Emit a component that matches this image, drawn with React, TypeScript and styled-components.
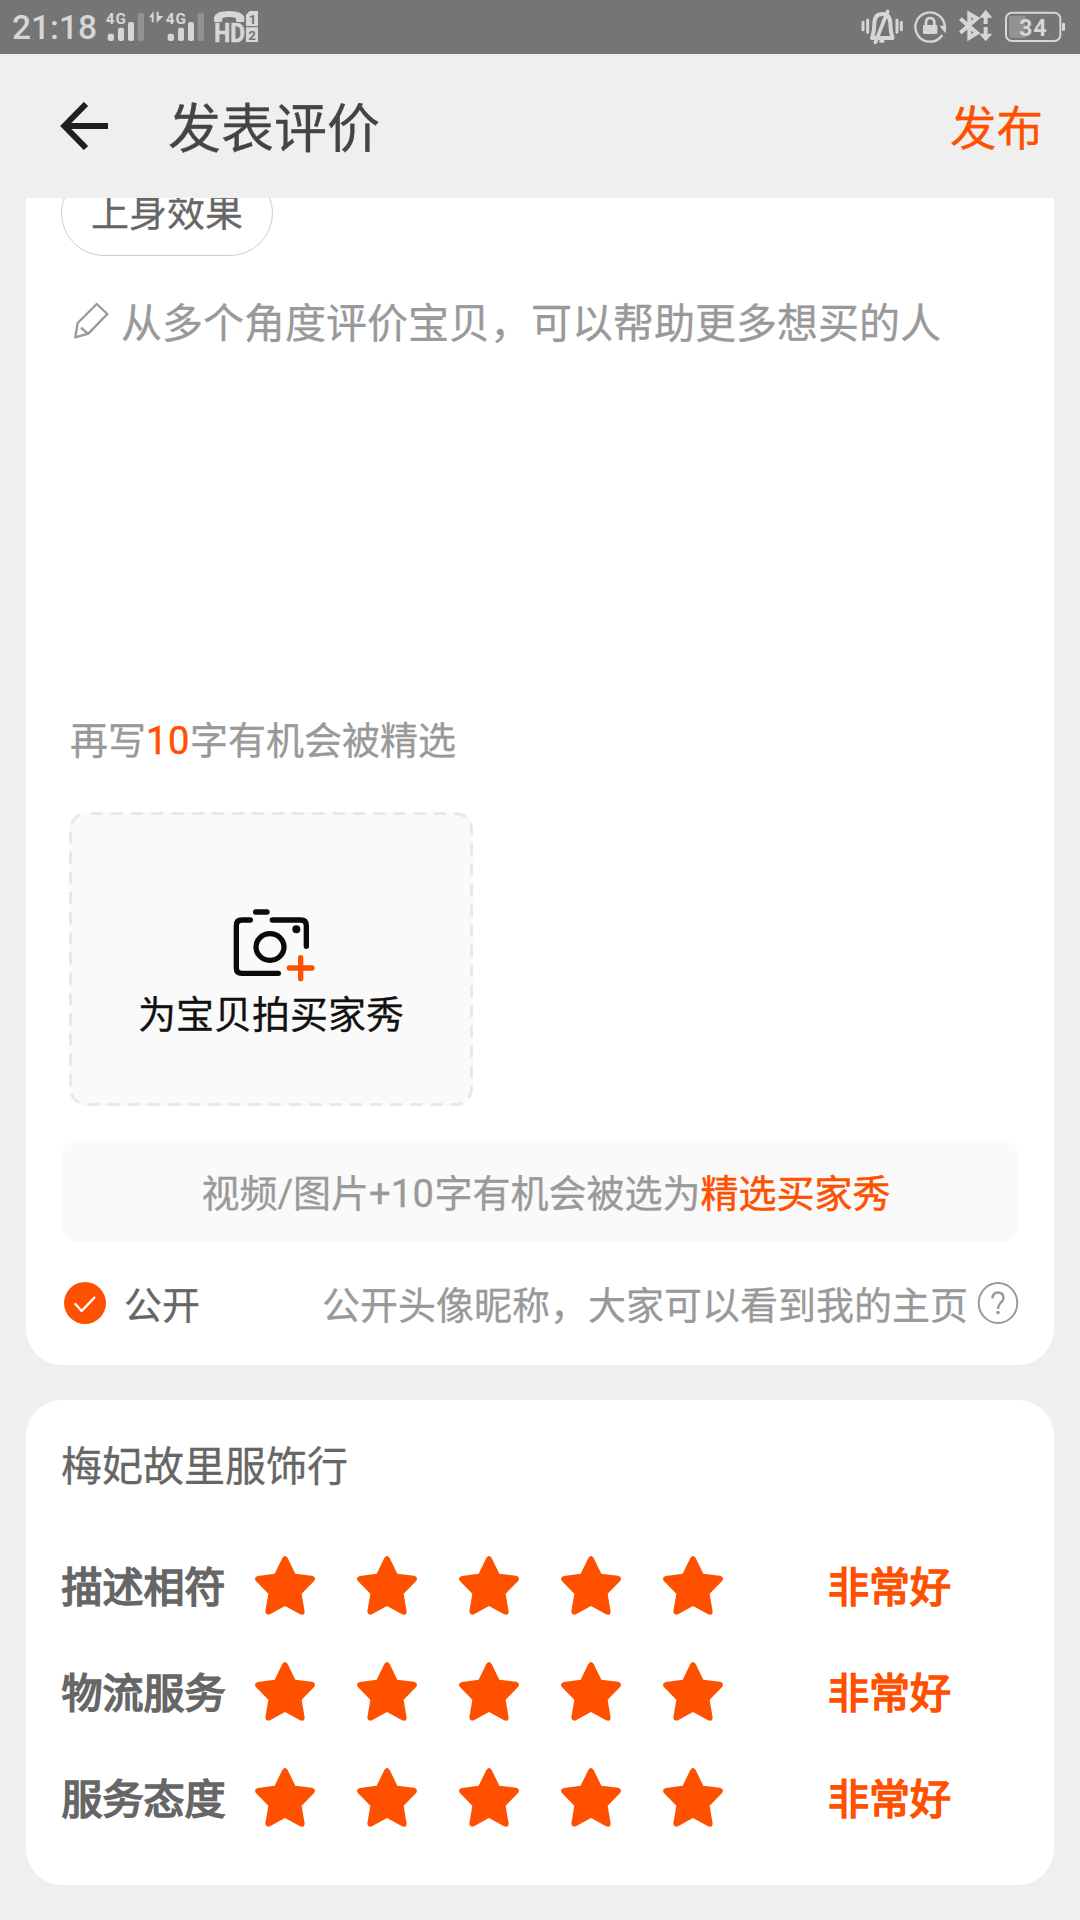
import React from "react";
import styled, { createGlobalStyle } from "styled-components";

const ORANGE = "#ff5000";
const STATUS = "#d6d6d6";
const STATUS_DIM = "#929292";

const GlobalStyle = createGlobalStyle`
  * { box-sizing: border-box; }
  body {
    margin: 0;
    background: #efefef;
    font-family: Roboto, "Noto Sans CJK SC", sans-serif;
    -webkit-text-stroke: 0.3px currentColor;
  }
  svg { -webkit-text-stroke: 0; }
`;

const Screen = styled.div`
  width: 1080px;
  height: 1920px;
  display: flex;
  flex-direction: column;
  overflow: hidden;
  background: #efefef;
`;

const StatusBar = styled.div`
  flex: none;
  height: 54px;
  padding: 0 14px 0 12px;
  display: flex;
  align-items: center;
  justify-content: space-between;
  background: #757575;
`;

const StatusGroup = styled.div`
  display: flex;
  align-items: center;
`;

const Clock = styled.span`
  width: 92px;
  font-size: 33.5px;
  font-weight: 500;
  line-height: 54px;
  padding-top: 2px;
  color: ${STATUS};
  -webkit-text-stroke: 0;
`;

const StatusIcon = styled.svg<{ $gap?: number }>`
  display: block;
  flex: none;
  height: 54px;
  margin-left: ${(p) => p.$gap ?? 0}px;
  font-family: Roboto, sans-serif;
  font-weight: 700;
`;

const Header = styled.header`
  flex: none;
  height: 144px;
  padding: 0 37px 0 60px;
  display: flex;
  align-items: center;
`;

const BackIcon = styled.svg`
  flex: none;
  width: 48px;
  height: 48px;
`;

const Title = styled.h1`
  margin: 0 0 0 60px;
  padding-top: 8px;
  flex: 1;
  font-size: 53px;
  font-weight: 400;
  line-height: 70px;
  color: #444;
`;

const Publish = styled.button`
  border: 0;
  padding: 6px 0 0;
  background: none;
  font: inherit;
  font-size: 46.5px;
  line-height: 64px;
  color: ${ORANGE};
`;

const Content = styled.main`
  flex: 1;
  min-height: 0;
  overflow: hidden;
  padding: 0 26px;
  display: flex;
  flex-direction: column;
  gap: 35px;
`;

const ReviewCard = styled.section`
  flex: none;
  height: 1167px;
  padding: 0 35px;
  overflow: hidden;
  display: flex;
  flex-direction: column;
  align-items: flex-start;
  background: #fff;
  border-radius: 0 0 36px 36px;
`;

const Tag = styled.span`
  flex: none;
  width: 212px;
  height: 86px;
  margin-top: -28px;
  display: flex;
  justify-content: center;
  border: 1px solid #ccc;
  border-radius: 43px;
  font-size: 38px;
  line-height: 84px;
  color: #666;
`;

const Editor = styled.div`
  flex: 1;
  margin-top: 36px;
  padding-left: 13px;
  display: flex;
  align-items: flex-start;
`;

const PencilIcon = styled.svg`
  flex: none;
  width: 36px;
  height: 38px;
  margin-top: 10px;
`;

const Placeholder = styled.span`
  margin-left: 11px;
  font-size: 41px;
  line-height: 64px;
  color: #999;
`;

const Counter = styled.div`
  flex: none;
  height: 50px;
  margin-left: 9px;
  font-size: 38px;
  line-height: 50px;
  color: #999;
`;

const Accent = styled.span`
  color: ${ORANGE};
  -webkit-text-stroke-width: 0.5px;
`;

const Digits = styled.span`
  letter-spacing: 0.6px;
`;

const Upload = styled.div`
  position: relative;
  flex: none;
  width: 404px;
  height: 294px;
  margin: 46px 0 0 8px;
  padding-top: 96px;
  display: flex;
  flex-direction: column;
  align-items: center;
  background: #fafafa;
  border-radius: 17px;
`;

const DashedOutline = styled.svg`
  position: absolute;
  inset: 0;
`;

const CameraIcon = styled.svg`
  flex: none;
  width: 84px;
  height: 74px;
  margin-left: 6px;
`;

const UploadLabel = styled.span`
  margin-top: 8px;
  font-size: 38px;
  line-height: 51px;
  color: #111;
`;

const Tip = styled.div`
  flex: none;
  width: 958px;
  height: 101px;
  margin-top: 35px;
  padding-left: 12px;
  display: flex;
  justify-content: center;
  background: #fafafa;
  border-radius: 17px;
  font-size: 38px;
  line-height: 107px;
  color: #999;
`;

const PublicRow = styled.div`
  flex: none;
  width: 958px;
  height: 60px;
  margin: 31px 0 32px;
  padding: 0 0 0 3px;
  display: flex;
  align-items: center;
  font-size: 38px;
  line-height: 60px;
`;

const RoundIcon = styled.svg`
  flex: none;
  width: 42px;
  height: 42px;
`;

const PublicLabel = styled.span`
  margin-left: 18px;
  padding-top: 6px;
  color: #666;
`;

const PublicHint = styled.span`
  margin: 0 9px 0 auto;
  padding-top: 6px;
  color: #999;
`;

const ShopCard = styled.section`
  flex: none;
  height: 485px;
  padding: 36px 35px 0;
  background: #fff;
  border-radius: 36px;
`;

const ShopName = styled.h2`
  margin: 0;
  height: 96px;
  font-size: 41px;
  font-weight: 400;
  line-height: 62px;
  color: #666;
`;

const RatingRow = styled.div`
  height: 106px;
  display: flex;
  align-items: center;
  font-size: 41px;
  line-height: 60px;
  -webkit-text-stroke-width: 1.7px;
`;

const RatingLabel = styled.span`
  width: 194px;
  padding: 5px 0 0 0.5px;
  color: #666;
`;

const Stars = styled.div`
  display: flex;
  gap: 42px;
`;

const StarShape = styled.svg`
  width: 60px;
  height: 59px;
`;

const Verdict = styled.span`
  margin-left: 105px;
  padding-top: 5px;
  color: ${ORANGE};
`;

function SignalBars({ x }: { x: number }) {
  return (
    <g fill={STATUS}>
      <rect x={x} y="101" width="19" height="22" rx="7" />
      <rect x={x + 31} y="83" width="18" height="40" rx="6" />
      <rect x={x + 61} y="66" width="18" height="57" rx="6" />
      <rect x={x + 90} y="38" width="19" height="85" rx="6" fill={STATUS_DIM} />
    </g>
  );
}

function Star() {
  return (
    <StarShape viewBox="705 529 180 177">
      <path
        fill={ORANGE}
        d="M787 535Q795 523 803 535L826 582L876 588Q889 591 883 603L845 642L854 696Q853 709 840 704L795 679L750 704Q737 708 736 695L745 642L707 603Q701 592 714 589L764 582Z"
      />
    </StarShape>
  );
}

const ratings = ["描述相符", "物流服务", "服务态度"];

export default function App() {
  return (
    <Screen lang="zh-CN">
      <GlobalStyle />
      <StatusBar>
        <StatusGroup>
          <Clock>21:18</Clock>
          <StatusIcon viewBox="312 0 126 162" width="42">
            <text x="317" y="71" fontSize="46" fill={STATUS} textLength="61">4G</text>
            <SignalBars x={323} />
          </StatusIcon>
          <StatusIcon viewBox="441 0 177 162" width="59" $gap={1}>
            <path fill={STATUS} d="M447 52L461 34V67H455V52ZM470 35H476V48H490L470 69Z" />
            <text x="497" y="71" fontSize="46" fill={STATUS} textLength="61">4G</text>
            <SignalBars x={503} />
          </StatusIcon>
          <StatusIcon viewBox="636 0 144 162" width="48" $gap={6}>
            <path
              fill={STATUS}
              d="M642 62V51Q648 33 687 33Q726 33 733 51V62Q733 66 728 66H712Q708 66 708 61V54Q687 48 667 54V61Q667 66 662 66H647Q642 66 642 62Z"
            />
            <path
              fill={STATUS}
              fillRule="evenodd"
              d="M749 33H774V78H738V44ZM738 82H774V126H738Z"
            />
            <text x="643" y="125" fontSize="75" fill={STATUS} stroke={STATUS} strokeWidth="2" textLength="92" lengthAdjust="spacingAndGlyphs">HD</text>
            <text x="746" y="71" fontSize="40" fill="#757575">1</text>
            <text x="745" y="119" fontSize="40" fill="#757575">2</text>
          </StatusIcon>
        </StatusGroup>
        <StatusGroup>
          <StatusIcon viewBox="58 0 132 162" width="44">
            <g fill="none" stroke={STATUS} strokeLinecap="round">
              <path strokeWidth="9" d="M67 67V89M81 60V97M169 60V97M182 67V89" />
              <path
                strokeWidth="12"
                strokeLinejoin="round"
                strokeLinecap="butt"
                d="M94 114Q100 98 101 70Q102 42 125 42Q148 42 149 70Q150 98 156 114Z"
              />
              <path strokeWidth="11" d="M104 127L141 34" />
              <path strokeWidth="9" d="M120 124H127" />
            </g>
          </StatusIcon>
          <StatusIcon viewBox="218 0 104 162" width="34.67" $gap={9}>
            <path fill="none" stroke={STATUS} strokeWidth="7" d="M306 105A44 44 0 1 1 313 83" />
            <path fill={STATUS} d="M298 79L318 76L316 100Z" />
            <rect x="248" y="75" width="43" height="27" rx="3" fill={STATUS} />
            <path fill="none" stroke={STATUS} strokeWidth="8" d="M257 77V66Q258 54 269.500 54Q281 54 282 66V77" />
          </StatusIcon>
          <StatusIcon viewBox="354 0 106 162" width="35.33" $gap={10.6}>
            <path
              fill="none"
              stroke={STATUS}
              strokeWidth="12"
              d="M361 56L411 99L388 113V42L411 55L361 98"
            />
            <path fill={STATUS} d="M437 29L457 53H443V72H431V53H418ZM431 81H443V101H457L437 124L418 101H431Z" />
          </StatusIcon>
          <StatusIcon viewBox="492 0 186 162" width="62" $gap={10.7}>
            <rect x="498" y="38" width="163" height="85" rx="18" fill="none" stroke={STATUS} strokeWidth="6" />
            <path fill={STATUS_DIM} d="M557 47V114H516Q507 114 507 105V56Q507 47 516 47Z" />
            <rect x="666" y="68" width="9" height="25" rx="4" fill={STATUS} />
            <text x="537" y="108" fontSize="70" fill={STATUS} textLength="83">34</text>
          </StatusIcon>
        </StatusGroup>
      </StatusBar>

      <Header>
        <BackIcon viewBox="180 156 144 144" fill="none" stroke="#1f1f1f" strokeWidth="18">
          <path d="M258 162L193 228L258 294M193 228H324" />
        </BackIcon>
        <Title>发表评价</Title>
        <Publish>发布</Publish>
      </Header>

      <Content>
        <ReviewCard>
          <Tag>上身效果</Tag>
          <Editor>
            <PencilIcon viewBox="102 66 108 114" fill="none" stroke="#999" strokeWidth="7" strokeLinejoin="round">
              <path d="M106 172L113 129L170 72L202 102L145 161ZM123 143L143 161" />
            </PencilIcon>
            <Placeholder>从多个角度评价宝贝，可以帮助更多想买的人</Placeholder>
          </Editor>
          <Counter>
            再写
            <Accent>
              <Digits>10</Digits>
            </Accent>
            字有机会被精选
          </Counter>
          <Upload>
            <DashedOutline width="404" height="294">
              <rect
                x="1.5"
                y="1.5"
                width="401"
                height="291"
                rx="16"
                fill="none"
                stroke="#e8e8e8"
                strokeWidth="3"
                strokeDasharray="12 8.2"
                strokeDashoffset="-4"
              />
            </DashedOutline>
            <CameraIcon viewBox="546 624 252 222" fill="none" stroke="#0a0a0a" strokeWidth="16" strokeLinecap="round">
              <path d="M617 636H651M601 660H576Q559 660 559 677V804Q559 820 576 820H685M667 660H752Q769 660 769 677V739" />
              <ellipse cx="660" cy="741" rx="42" ry="40" />
              <circle cx="739" cy="688" r="12" fill="#0a0a0a" stroke="none" />
              <path stroke={ORANGE} d="M718 804H786M752 773V836" />
            </CameraIcon>
            <UploadLabel>为宝贝拍买家秀</UploadLabel>
          </Upload>
          <Tip>
            视频/图片+<Digits>10</Digits>字有机会被选为<Accent>精选买家秀</Accent>
          </Tip>
          <PublicRow>
            <RoundIcon viewBox="72 456 126 126">
              <circle cx="135" cy="519" r="63" fill={ORANGE} />
              <path d="M106 522L125 543L163 503" fill="none" stroke="#fff" strokeWidth="7" strokeLinecap="round" strokeLinejoin="round" />
            </RoundIcon>
            <PublicLabel>公开</PublicLabel>
            <PublicHint>公开头像昵称，大家可以看到我的主页</PublicHint>
            <RoundIcon viewBox="0 0 42 42" fill="none" stroke="#999">
              <ellipse cx="21" cy="21" rx="19.300" ry="20" strokeWidth="2" />
              <path d="M15.500 16.500Q15.500 10.500 21 10.500Q26.500 10.500 26.500 16Q26.500 18.500 23.500 21Q21 23.500 21 27" strokeWidth="2.400" />
              <circle cx="21" cy="30.500" r="1.800" fill="#999" stroke="none" />
            </RoundIcon>
          </PublicRow>
        </ReviewCard>

        <ShopCard>
          <ShopName>梅妃故里服饰行</ShopName>
          {ratings.map((label) => (
            <RatingRow key={label}>
              <RatingLabel>{label}</RatingLabel>
              <Stars>
                {[1, 2, 3, 4, 5].map((n) => (
                  <Star key={n} />
                ))}
              </Stars>
              <Verdict>非常好</Verdict>
            </RatingRow>
          ))}
        </ShopCard>
      </Content>
    </Screen>
  );
}
